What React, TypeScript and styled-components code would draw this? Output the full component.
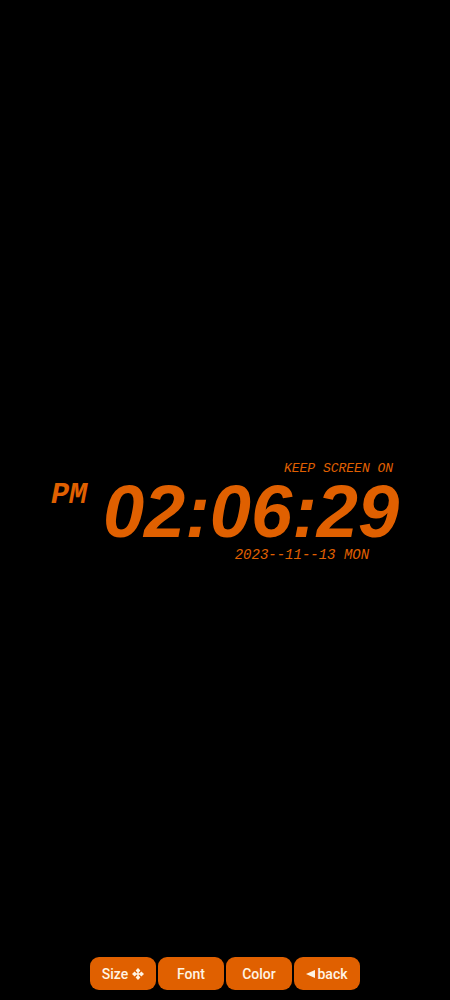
import React from "react";
import styled, { createGlobalStyle } from "styled-components";

const GlobalStyle = createGlobalStyle`
  * { box-sizing: border-box; }
  body { margin: 0; background: #000; }
`;

const Screen = styled.div`
  display: flex;
  flex-direction: column;
  min-height: 100vh;
  background: #000;
  color: #e06000;
`;

const Face = styled.main`
  flex: 1;
  display: flex;
  align-items: center;
  justify-content: center;
  padding-top: 66px;
`;

const Clock = styled.div`
  display: grid;
  grid-template-columns: auto auto;
  column-gap: 16px;
`;

const Line = styled.p<{ $size: number; $end: number }>`
  grid-column: 2;
  justify-self: end;
  margin: 0;
  padding-right: ${(p) => p.$end}px;
  font: italic ${(p) => p.$size}px/20px "Liberation Mono", monospace;
  white-space: nowrap;
`;

const Meridiem = styled.span`
  grid-column: 1;
  font: italic bold 30px/32px "Liberation Mono", monospace;
`;

const Time = styled.time`
  grid-column: 2;
  font: italic bold 74px/66px "Liberation Sans", Arial, sans-serif;
  white-space: nowrap;
`;

const Toolbar = styled.nav`
  display: flex;
  justify-content: center;
  gap: 2px;
  padding-bottom: 10px;
`;

const ToolButton = styled.button<{ $gap?: number }>`
  display: flex;
  align-items: center;
  justify-content: center;
  gap: ${(p) => p.$gap ?? 0}px;
  width: 66px;
  height: 33px;
  padding: 0;
  border: 0;
  border-radius: 9px;
  background: #e06000;
  color: #fff4e4;
  font: 500 14px/20px Roboto, sans-serif;
  white-space: nowrap;
  cursor: pointer;
`;

const Icon = styled.svg`
  flex: none;
  fill: currentColor;
`;

const MoveIcon = () => (
  <Icon width="12" height="12" viewBox="0 0 12 12" aria-hidden="true">
    <path d="M6 0 8.4 2.6 6.7 4.4V5.3H7.6L9.4 3.6 12 6 9.4 8.4 7.6 6.7H6.7V7.6L8.4 9.4 6 12 3.6 9.4 5.3 7.6V6.7H4.4L2.6 8.4 0 6 2.6 3.6 4.4 5.3H5.3V4.4L3.6 2.6Z" />
  </Icon>
);

const BackIcon = () => (
  <Icon width="9" height="9" viewBox="0 0 9 9" aria-hidden="true">
    <path d="M0 5 9 1V9Z" />
  </Icon>
);

export default function App() {
  return (
    <Screen>
      <GlobalStyle />
      <Face>
        <Clock>
          <Line $size={13} $end={6}>KEEP SCREEN ON</Line>
          <Meridiem>PM</Meridiem>
          <Time dateTime="14:06:29">02:06:29</Time>
          <Line $size={14} $end={30}>2023--11--13 MON</Line>
        </Clock>
      </Face>
      <Toolbar aria-label="Clock settings">
        <ToolButton type="button" $gap={4}>Size <MoveIcon /></ToolButton>
        <ToolButton type="button">Font</ToolButton>
        <ToolButton type="button">Color</ToolButton>
        <ToolButton type="button" $gap={2}><BackIcon />back</ToolButton>
      </Toolbar>
    </Screen>
  );
}
